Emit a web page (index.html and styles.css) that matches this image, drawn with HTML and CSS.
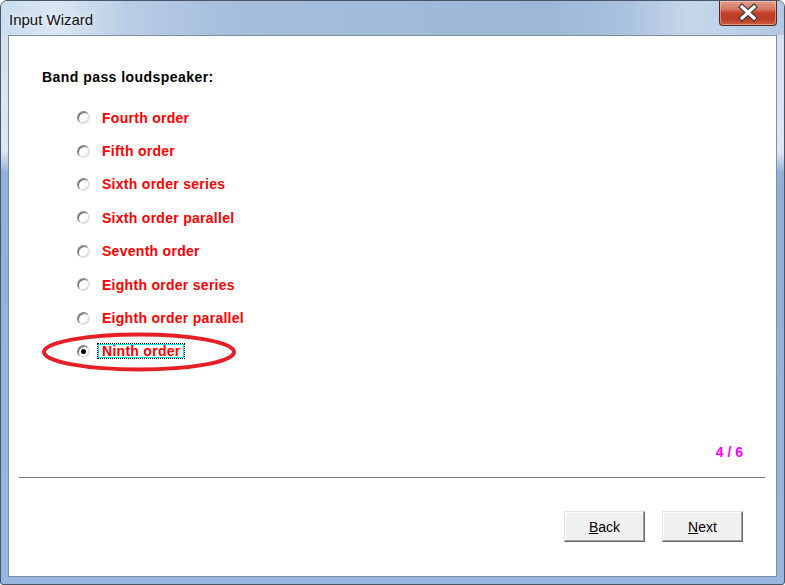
FILE: index.html
```html
<!DOCTYPE html>
<html>
<head>
<meta charset="utf-8">
<title>Input Wizard</title>
<link rel="stylesheet" href="styles.css">
</head>
<body>
<div class="window">
  <div class="titlebar">
    <span class="title">Input Wizard</span>
    <div class="close">
      <svg width="58" height="25" viewBox="0 0 58 25">
        <path d="M23 7 L35 18 M35 7 L23 18" stroke="#3c3c3c" stroke-width="5.5" stroke-linecap="square" fill="none"/>
        <path d="M23 7 L35 18 M35 7 L23 18" stroke="#ffffff" stroke-width="3.2" stroke-linecap="square" fill="none"/>
      </svg>
    </div>
  </div>
  <div class="client">
    <div class="heading">Band pass loudspeaker:</div>
    <ul class="options">
      <li class="option"><span class="radio"></span><span class="label">Fourth order</span></li>
      <li class="option"><span class="radio"></span><span class="label">Fifth order</span></li>
      <li class="option"><span class="radio"></span><span class="label">Sixth order series</span></li>
      <li class="option"><span class="radio"></span><span class="label">Sixth order parallel</span></li>
      <li class="option"><span class="radio"></span><span class="label">Seventh order</span></li>
      <li class="option"><span class="radio"></span><span class="label">Eighth order series</span></li>
      <li class="option"><span class="radio"></span><span class="label">Eighth order parallel</span></li>
      <li class="option"><span class="radio checked"></span><span class="label focused">Ninth order</span></li>
    </ul>
    <div class="pager">4 / 6</div>
    <div class="sep"></div>
    <div class="buttons">
      <button class="btn"><u>B</u>ack</button>
      <button class="btn"><u>N</u>ext</button>
    </div>
    <svg class="annotation" width="200" height="44" viewBox="0 0 200 44">
      <ellipse cx="97" cy="21" rx="95" ry="17.5" fill="none" stroke="#e61e25" stroke-width="4"/>
    </svg>
  </div>
</div>
</body>
</html>
```

FILE: styles.css
```css
html, body {
  margin: 0;
  padding: 0;
}
body {
  width: 785px;
  height: 585px;
  overflow: hidden;
  background: #ffffff;
}
.window {
  box-sizing: border-box;
  width: 785px;
  height: 585px;
  border: 1px solid #4b5568;
  border-radius: 7px 7px 3px 3px;
  background: linear-gradient(to bottom, #d3dfec 0, #dfe7f1 150px, #91b0d8 172px, #98b7de 100%);
  display: flex;
  flex-direction: column;
  overflow: hidden;
}
.titlebar {
  height: 34px;
  flex: none;
  display: flex;
  align-items: flex-start;
  background: linear-gradient(90deg, #cadcef 0, #dae6f3 7%, #b9cee6 16%, #a7bfdc 28%, #a1bada 50%, #9cb7d8 70%, #aac2de 80%, #c6d7ea 88%, #b3c8e2 100%);
}
.title {
  font-family: "Liberation Sans", Arial, sans-serif;
  font-size: 15px;
  color: #111;
  margin: 10px 0 0 8px;
  line-height: 17px;
  text-shadow: 0 0 6px rgba(255,255,255,0.9);
}
.close {
  margin-left: auto;
  margin-right: 7px;
  width: 58px;
  height: 25px;
  box-sizing: border-box;
  border: 1px solid #4b2a24;
  border-top: none;
  border-radius: 0 0 4px 4px;
  background: linear-gradient(to bottom, #e0a08f 0, #d57461 35%, #c2412a 50%, #bb3c25 75%, #cf5e3f 100%);
  box-shadow: inset 0 0 0 1px rgba(255,220,210,0.45);
  position: relative;
}
.close svg {
  position: absolute;
  left: -1px;
  top: -1px;
}
.client {
  position: relative;
  flex: 1;
  margin: 0 7px 7px 7px;
  background: #ffffff;
  border: 1px solid #7d90a8;
  display: flex;
  flex-direction: column;
  font-family: "Liberation Sans", Arial, sans-serif;
}
.heading {
  margin: 33px 0 0 33px;
  font-size: 14px;
  font-weight: bold;
  line-height: 16px;
  color: #000;
  letter-spacing: 0.45px;
}
.options {
  list-style: none;
  margin: 16px 0 0 0;
  padding: 0 0 0 68px;
}
.option {
  height: 33.4px;
  display: flex;
  align-items: center;
}
.radio {
  box-sizing: border-box;
  width: 13px;
  height: 13px;
  border-radius: 50%;
  border: 1px solid;
  border-color: #8a8a8a #e2e2e2 #e2e2e2 #8a8a8a;
  box-shadow: inset 1px 1px 0 #6a6a6a, inset -1px -1px 0 #dadada;
  background: #fff;
  position: relative;
  flex: none;
}
.radio.checked::after {
  content: "";
  position: absolute;
  left: 3px;
  top: 3px;
  width: 5px;
  height: 5px;
  border-radius: 50%;
  background: #000;
}
.label {
  margin-left: 7px;
  padding: 0 3px 0 4px;
  border: 1px solid transparent;
  font-size: 14px;
  font-weight: bold;
  line-height: 14px;
  letter-spacing: 0.28px;
  color: #ff0000;
}
.label.focused {
  outline: 1px dotted #000;
  outline-offset: -1px;
  box-shadow: inset 0 0 0 1px #00e6e6;
}
.pager {
  margin: 76px 33px 0 0;
  text-align: right;
  font-size: 14px;
  font-weight: bold;
  line-height: 16px;
  color: #ff00ff;
}
.sep {
  margin: 17px 11px 0 10px;
  height: 1px;
  background: #7a7a7a;
}
.buttons {
  margin: 33px 33px 0 0;
  display: flex;
  justify-content: flex-end;
  gap: 17px;
}
.btn {
  box-sizing: border-box;
  width: 81px;
  height: 31px;
  padding: 0;
  background: #f0f0f0;
  border: 1px solid;
  border-color: #e3e3e3 #696969 #696969 #e3e3e3;
  box-shadow: inset -1px -1px 0 #a0a0a0, inset 1px 1px 0 #ffffff;
  font-family: "Liberation Sans", Arial, sans-serif;
  font-size: 14px;
  color: #000;
  border-radius: 0;
}
.annotation {
  position: absolute;
  left: 33px;
  top: 295px;
}
```
